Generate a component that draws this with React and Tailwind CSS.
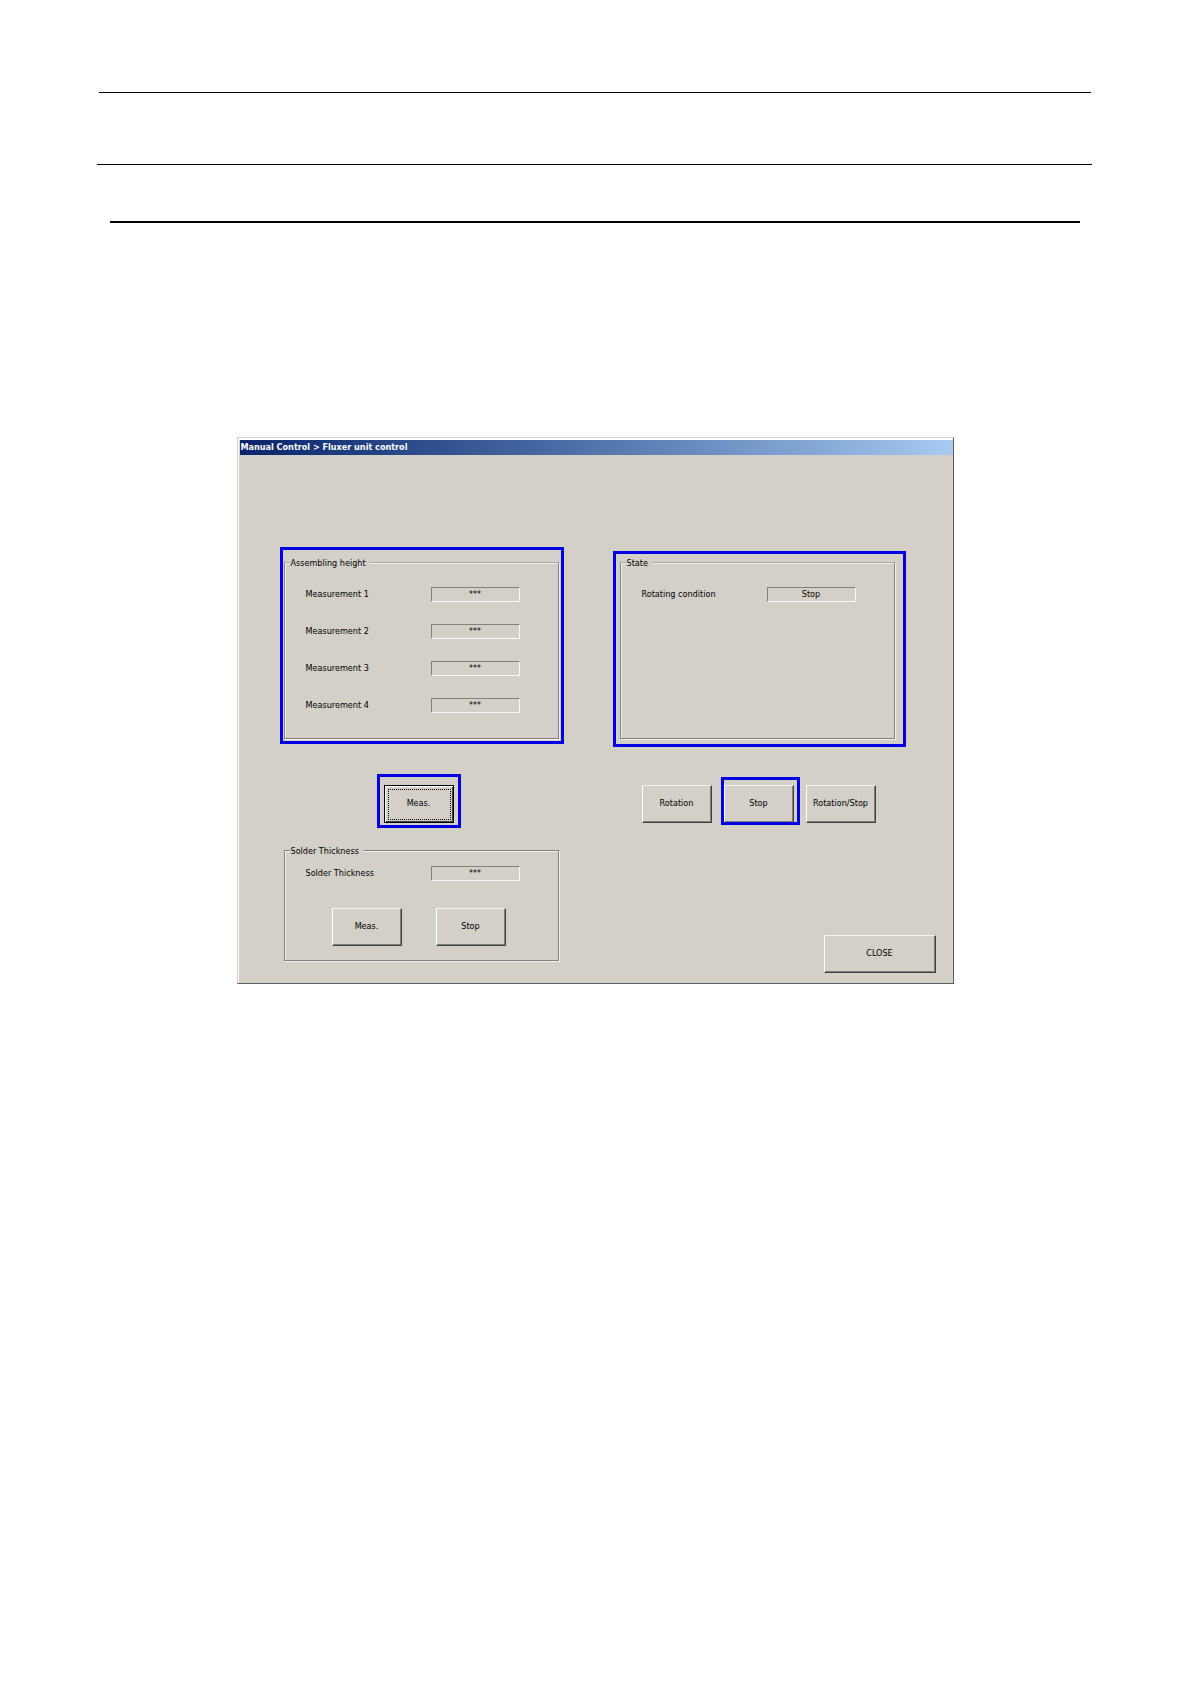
import React from "react";

function Highlight({ className }) {
  return (
    <span
      aria-hidden="true"
      className={`pointer-events-none absolute border-[3px] border-[#0000e4] ${className}`}
    />
  );
}

function Group({ title, className = "", children }) {
  return (
    <fieldset
      className={`min-w-0 border border-[#84817b] pl-[21px] pr-[38px] shadow-[1px_1px_0_#f4f2ee,inset_1px_1px_0_#f4f2ee] ${className}`}
    >
      <legend className="-ml-4 h-4 bg-[#d4d0c8] pl-px pr-1 leading-[18px]">{title}</legend>
      {children}
    </fieldset>
  );
}

function Reading({ id, label, value }) {
  return (
    <div className="flex h-[15px] items-center justify-between">
      <label htmlFor={id} className="whitespace-nowrap">
        {label}
      </label>
      <output
        id={id}
        className="h-[15px] w-[89px] border border-b-[#f8f7f5] border-l-[#84817b] border-r-[#f8f7f5] border-t-[#84817b] text-center leading-[13px]"
      >
        {value}
      </output>
    </div>
  );
}

function PushButton({ children, wide = false, focused = false }) {
  return (
    <button
      type="button"
      className={`relative h-[38px] whitespace-nowrap bg-[#d4d0c8] text-center ${
        wide ? "w-28" : "w-[70px]"
      } ${
        focused
          ? "border border-black shadow-[inset_1px_1px_0_#fff,inset_-1px_-1px_0_#404040]"
          : "border border-b-[#404040] border-l-white border-r-[#404040] border-t-[#f4f2ee] shadow-[inset_-1px_-1px_0_#84817b]"
      }`}
    >
      {children}
      {focused && (
        <span
          aria-hidden="true"
          className="absolute inset-[3px] right-[2px] bottom-[2px] border border-dotted border-black"
        />
      )}
    </button>
  );
}

export default function App() {
  return (
    <div className="min-h-screen bg-white pt-[92px] pb-16 text-black">
      <header>
        <hr className="mx-[99px] border-t border-black" />
        <hr className="mr-[98px] ml-[97px] mt-[71px] border-t border-black" />
        <hr className="mx-[110px] mt-14 border-t-2 border-black" />
      </header>

      <main className="mx-auto mt-[214px] w-full max-w-[717px] border border-b-[#5c5f62] border-l-[#d4d0c8] border-r-[#5c5f62] border-t-[#d4d0c8] bg-[#d4d0c8] font-['DejaVu_Sans_Condensed','DejaVu_Sans',sans-serif] text-[9px]">
        <div className="border-l border-t-2 border-white">
          <h1 className="ml-px h-[15px] bg-linear-to-r from-[#0a246a] to-[#a6caf0] pl-px text-[9px] font-bold leading-[15px] text-white">
            Manual Control &gt; Fluxer unit control
          </h1>

          <div className="grid grid-cols-[minmax(0,275fr)_minmax(0,316fr)] gap-x-[61px] pt-[99px] pr-[17px] pb-[10px] pl-[45px]">
            <section className="relative">
              <Group title="Assembling height" className="h-full border-t-[#aaa69f]">
                <div className="flex flex-col gap-[22px] pt-[17px] pb-[25px]">
                  <Reading id="m1" label="Measurement 1" value="***" />
                  <Reading id="m2" label="Measurement 2" value="***" />
                  <Reading id="m3" label="Measurement 3" value="***" />
                  <Reading id="m4" label="Measurement 4" value="***" />
                </div>
              </Group>
              <Highlight className="-top-[7px] -right-[5px] -bottom-[5px] -left-1" />
            </section>

            <section className="relative mr-[41px]">
              <Group title="State" className="h-full border-t-[#aaa69f]">
                <div className="pt-[17px]">
                  <Reading id="rotating" label="Rotating condition" value="Stop" />
                </div>
              </Group>
              <Highlight className="-top-[3px] -right-[11px] -bottom-[8px] -left-[7px]" />
            </section>

            <div className="mt-[46px] flex pl-[100px]">
              <div className="relative">
                <PushButton focused>Meas.</PushButton>
                <Highlight className="-top-[11px] -right-[7px] -bottom-[5px] -left-[7px]" />
              </div>
            </div>

            <div className="mt-[46px] flex gap-3 pl-[22px]">
              <PushButton>Rotation</PushButton>
              <div className="relative">
                <PushButton>Stop</PushButton>
                <Highlight className="-top-2 -right-[6px] -bottom-[2px] -left-[3px]" />
              </div>
              <PushButton>Rotation/Stop</PushButton>
            </div>

            <section className="mt-[19px] mb-3">
              <Group title="Solder Thickness">
                <div className="pt-2 pb-[14px]">
                  <Reading id="solder" label="Solder Thickness" value="***" />
                  <div className="mt-[27px] flex gap-[34px] pl-[26px]">
                    <PushButton>Meas.</PushButton>
                    <PushButton>Stop</PushButton>
                  </div>
                </div>
              </Group>
            </section>

            <div className="flex items-end justify-end">
              <PushButton wide>CLOSE</PushButton>
            </div>
          </div>
        </div>
      </main>
    </div>
  );
}
